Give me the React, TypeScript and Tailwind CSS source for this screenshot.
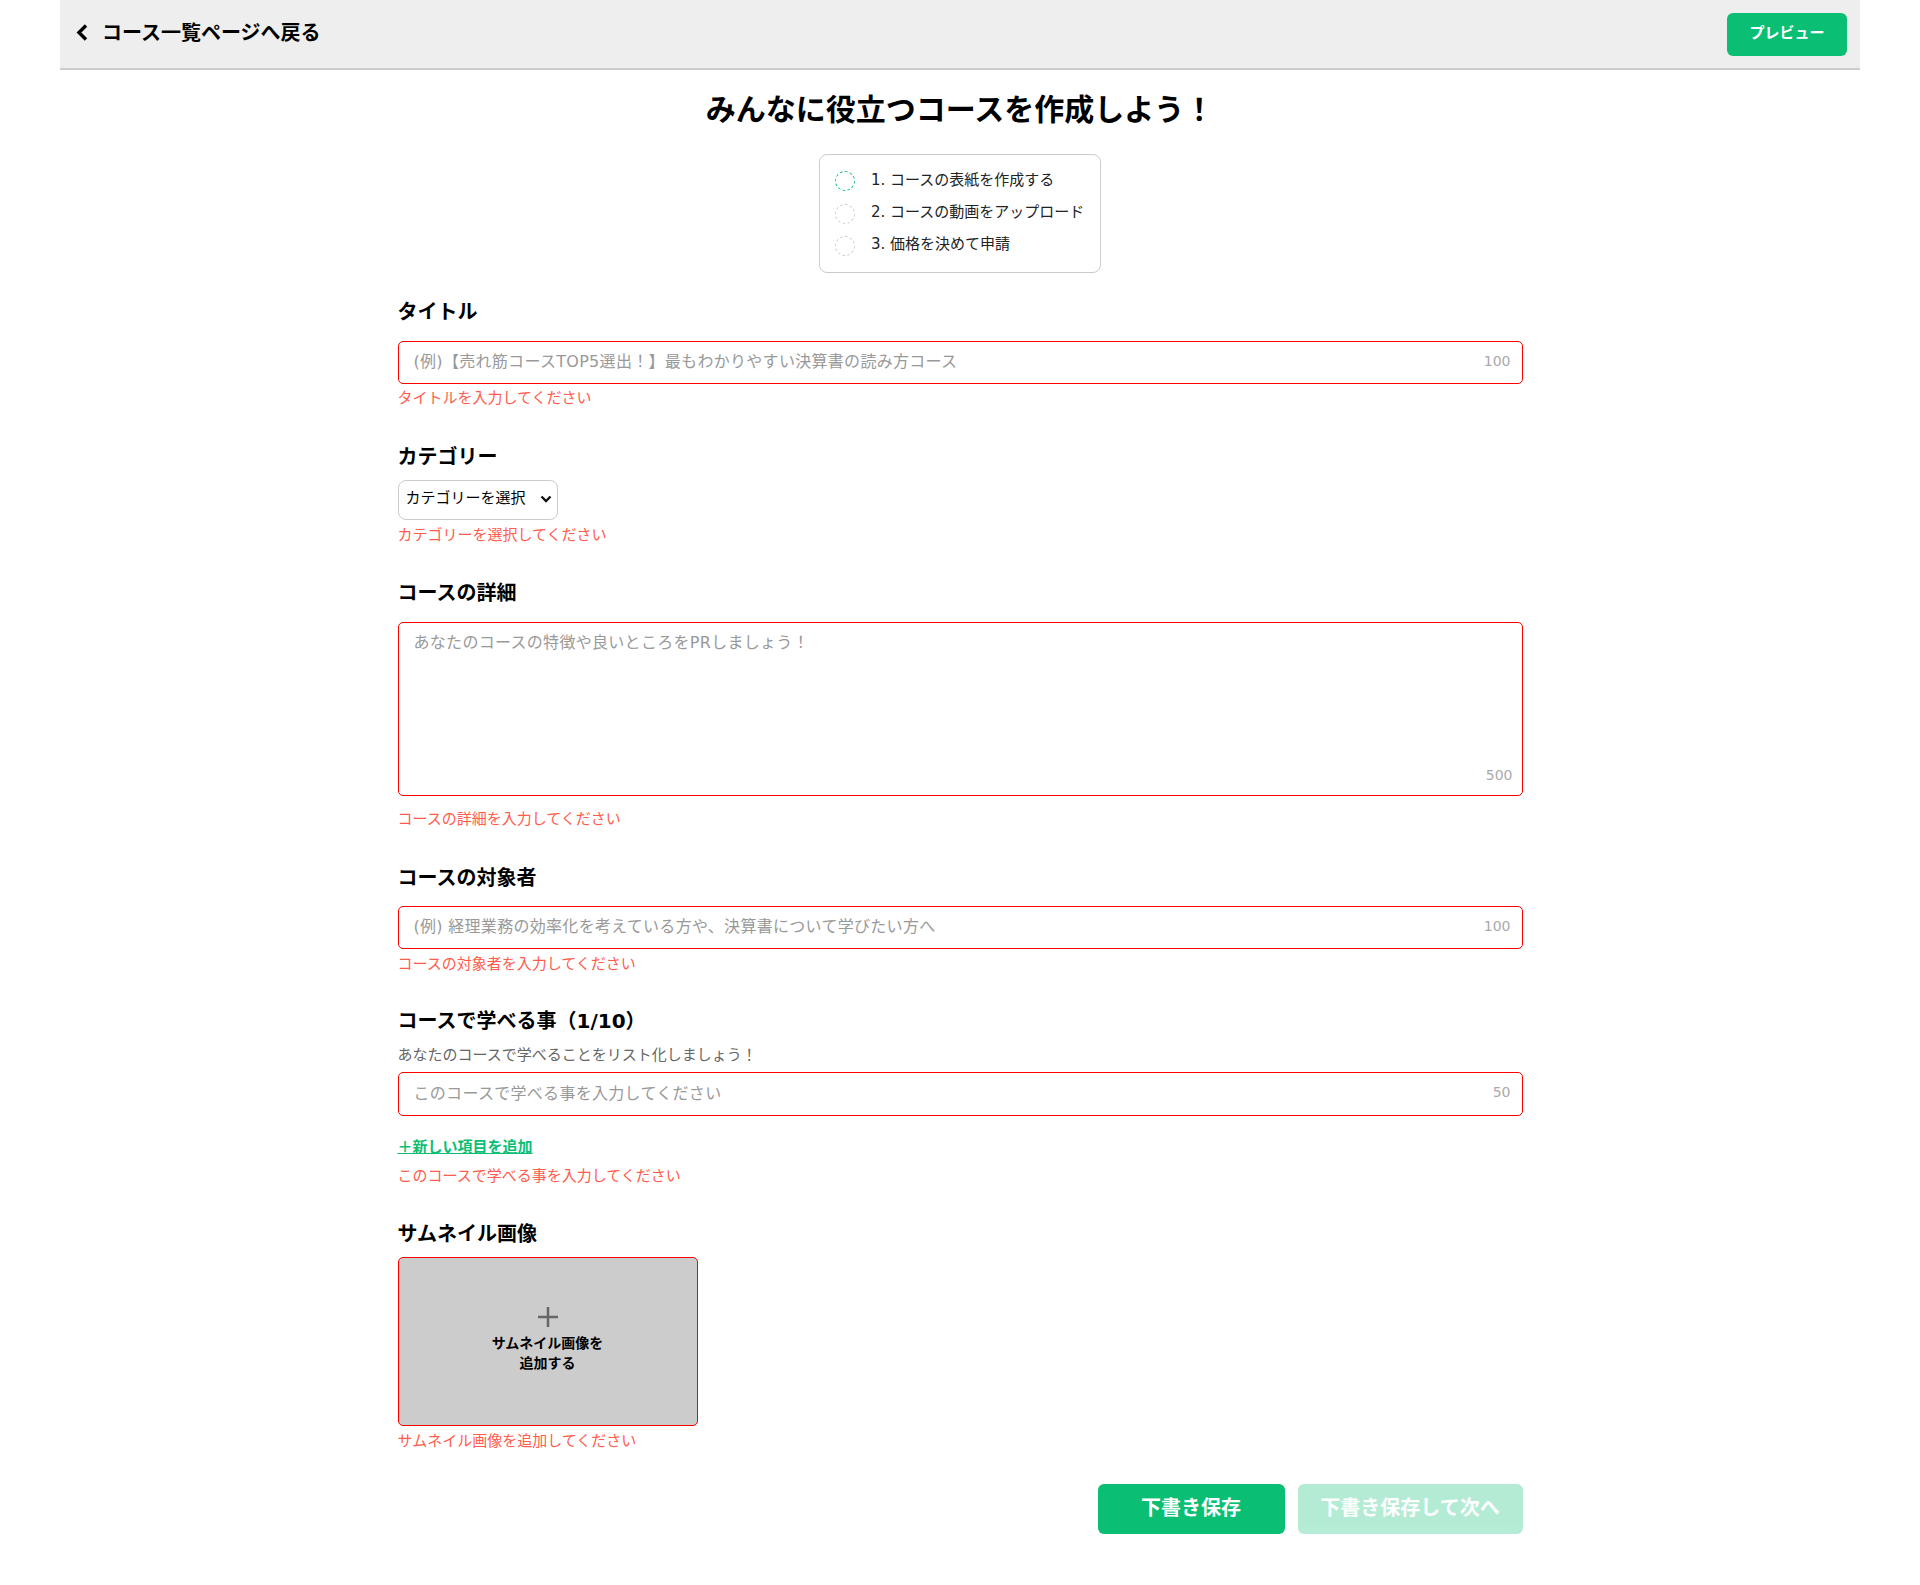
import React from "react";

const font = { fontFamily: '"DejaVu Sans", "Noto Sans CJK JP", sans-serif' };

function Label({ children, className = "" }: { children: React.ReactNode; className?: string }) {
  return <div className={"h-[30px] text-[20px] leading-[32px] font-bold text-black " + className}>{children}</div>;
}

function Err({ children, className = "" }: { children: React.ReactNode; className?: string }) {
  return <div className={"h-[22px] text-[15px] leading-[22px] text-[#ff5c4d] " + className}>{children}</div>;
}

function TextField({ placeholder, count, className = "" }: { placeholder: string; count: string; className?: string }) {
  return (
    <div className={"relative " + className}>
      <input
        readOnly
        placeholder={placeholder}
        className="h-full w-full rounded-[5px] border border-[#ff0000] bg-white pb-[2px] pl-[15px] pr-[50px] text-[16px] tracking-[0.3px] outline-none placeholder:text-[#999999]"
      />
      <span className="absolute right-[12px] top-[9px] text-[14px] leading-[22px] text-[#aaaaaa]">{count}</span>
    </div>
  );
}

function Step({ n, text, active }: { n: string; text: string; active?: boolean }) {
  return (
    <div className="flex h-[20px] items-center">
      <span
        className={
          "h-[20px] w-[20px] shrink-0 rounded-full border border-dashed " +
          (active ? "border-[#0abf74]" : "translate-y-[1px] border-[#cccccc]")
        }
      />
      <span className="ml-[16px] -mt-[2px] whitespace-nowrap text-[15px] leading-[20px] text-[#222222]">
        {n}. {text}
      </span>
    </div>
  );
}

export default function App() {
  return (
    <div style={font} className="mx-auto h-[1585px] w-[1800px] bg-white">
      <header className="flex h-[70px] items-center justify-between border-b-2 border-[#cccccc] bg-[#eeeeee] pl-[16px] pr-[13px]">
        <div className="-mt-[3px] flex items-center">
          <svg width="12" height="17" viewBox="0 0 12 17">
            <path d="M10 1.5 L3 8.5 L10 15.5" fill="none" stroke="#000" strokeWidth="3.4" />
          </svg>
          <span className="ml-[14px] text-[20px] font-bold text-black">コース一覧ページへ戻る</span>
        </div>
        <button className="h-[43px] w-[120px] rounded-[6px] bg-[#0abf74] pb-[2px] text-[15px] font-bold text-white">プレビュー</button>
      </header>

      <main className="mx-auto w-[1125px]">
        <h1 className="mt-[20px] h-[40px] text-center text-[30px] leading-[40px] font-bold text-black">
          みんなに役立つコースを作成しよう！
        </h1>
        <div className="mt-[24px] flex justify-center">
          <div className="flex h-[119px] w-[282px] flex-col gap-[12px] rounded-[8px] border border-[#cccccc] pl-[15px] pt-[16px]">
            <Step n="1" text="コースの表紙を作成する" active />
            <Step n="2" text="コースの動画をアップロード" />
            <Step n="3" text="価格を決めて申請" />
          </div>
        </div>

        <Label className="mt-[23px]">タイトル</Label>
        <TextField className="mt-[15px] h-[43px]" placeholder="(例)【売れ筋コースTOP5選出！】最もわかりやすい決算書の読み方コース" count="100" />
        <Err className="mt-[3px]">タイトルを入力してください</Err>

        <Label className="mt-[32px]">カテゴリー</Label>
        <div className="relative mt-[9px] h-[40px] w-[160px]">
          <select className="block h-full w-full appearance-none rounded-[8px] border border-[#cccccc] bg-white pb-[4px] pl-[7px] text-[15px] text-black outline-none">
            <option>カテゴリーを選択</option>
          </select>
          <svg width="12" height="8" viewBox="0 0 12 8" className="pointer-events-none absolute right-[6px] top-[15px]">
            <path d="M1.5 1.5 L6 6 L10.5 1.5" fill="none" stroke="#111" strokeWidth="2.3" />
          </svg>
        </div>
        <Err className="mt-[4px]">カテゴリーを選択してください</Err>

        <Label className="mt-[31px]">コースの詳細</Label>
        <div className="relative mt-[15px] h-[174px]">
          <textarea
            readOnly
            placeholder="あなたのコースの特徴や良いところをPRしましょう！"
            className="block h-full w-full resize-none rounded-[5px] border border-[#ff0000] bg-white px-[15px] py-[8px] text-[16px] tracking-[0.3px] outline-none placeholder:text-[#999999]"
          />
          <span className="absolute bottom-[10px] right-[10px] text-[14px] leading-[22px] text-[#aaaaaa]">500</span>
        </div>
        <Err className="mt-[12px]">コースの詳細を入力してください</Err>

        <Label className="mt-[32px]">コースの対象者</Label>
        <TextField className="mt-[14px] h-[43px]" placeholder="(例) 経理業務の効率化を考えている方や、決算書について学びたい方へ" count="100" />
        <Err className="mt-[4px]">コースの対象者を入力してください</Err>

        <Label className="mt-[30px]">コースで学べる事（1/10）</Label>
        <div className="mt-[8px] h-[24px] text-[15px] leading-[24px] text-[#666666]">あなたのコースで学べることをリスト化しましょう！</div>
        <TextField className="mt-[5px] h-[44px]" placeholder="このコースで学べる事を入力してください" count="50" />
        <div className="mt-[20px] h-[22px] text-[15px] leading-[22px] font-bold text-[#0abf74]">
          <a className="underline">＋新しい項目を追加</a>
        </div>
        <Err className="mt-[7px]">このコースで学べる事を入力してください</Err>

        <Label className="mt-[31px]">サムネイル画像</Label>
        <div className="mt-[9px] flex h-[169px] w-[300px] flex-col items-center rounded-[5px] border border-[#ff0000] bg-[#cccccc] pt-[49px]">
          <svg width="20" height="20" viewBox="0 0 20 20">
            <path d="M10 0 V20 M0 10 H20" stroke="#666666" strokeWidth="2.5" />
          </svg>
          <div className="mt-[6px] text-center text-[14px] leading-[20px] font-bold text-black">
            サムネイル画像を
            <br />
            追加する
          </div>
        </div>
        <Err className="mt-[4px]">サムネイル画像を追加してください</Err>

        <div className="mt-[32px] flex justify-end gap-[13px]">
          <button className="h-[50px] w-[187px] rounded-[6px] bg-[#0abf74] pb-[2px] text-[20px] font-bold text-white">下書き保存</button>
          <button className="h-[50px] w-[225px] rounded-[6px] bg-[#0abf74] pb-[2px] text-[20px] font-bold text-white opacity-30">下書き保存して次へ</button>
        </div>
      </main>
    </div>
  );
}
